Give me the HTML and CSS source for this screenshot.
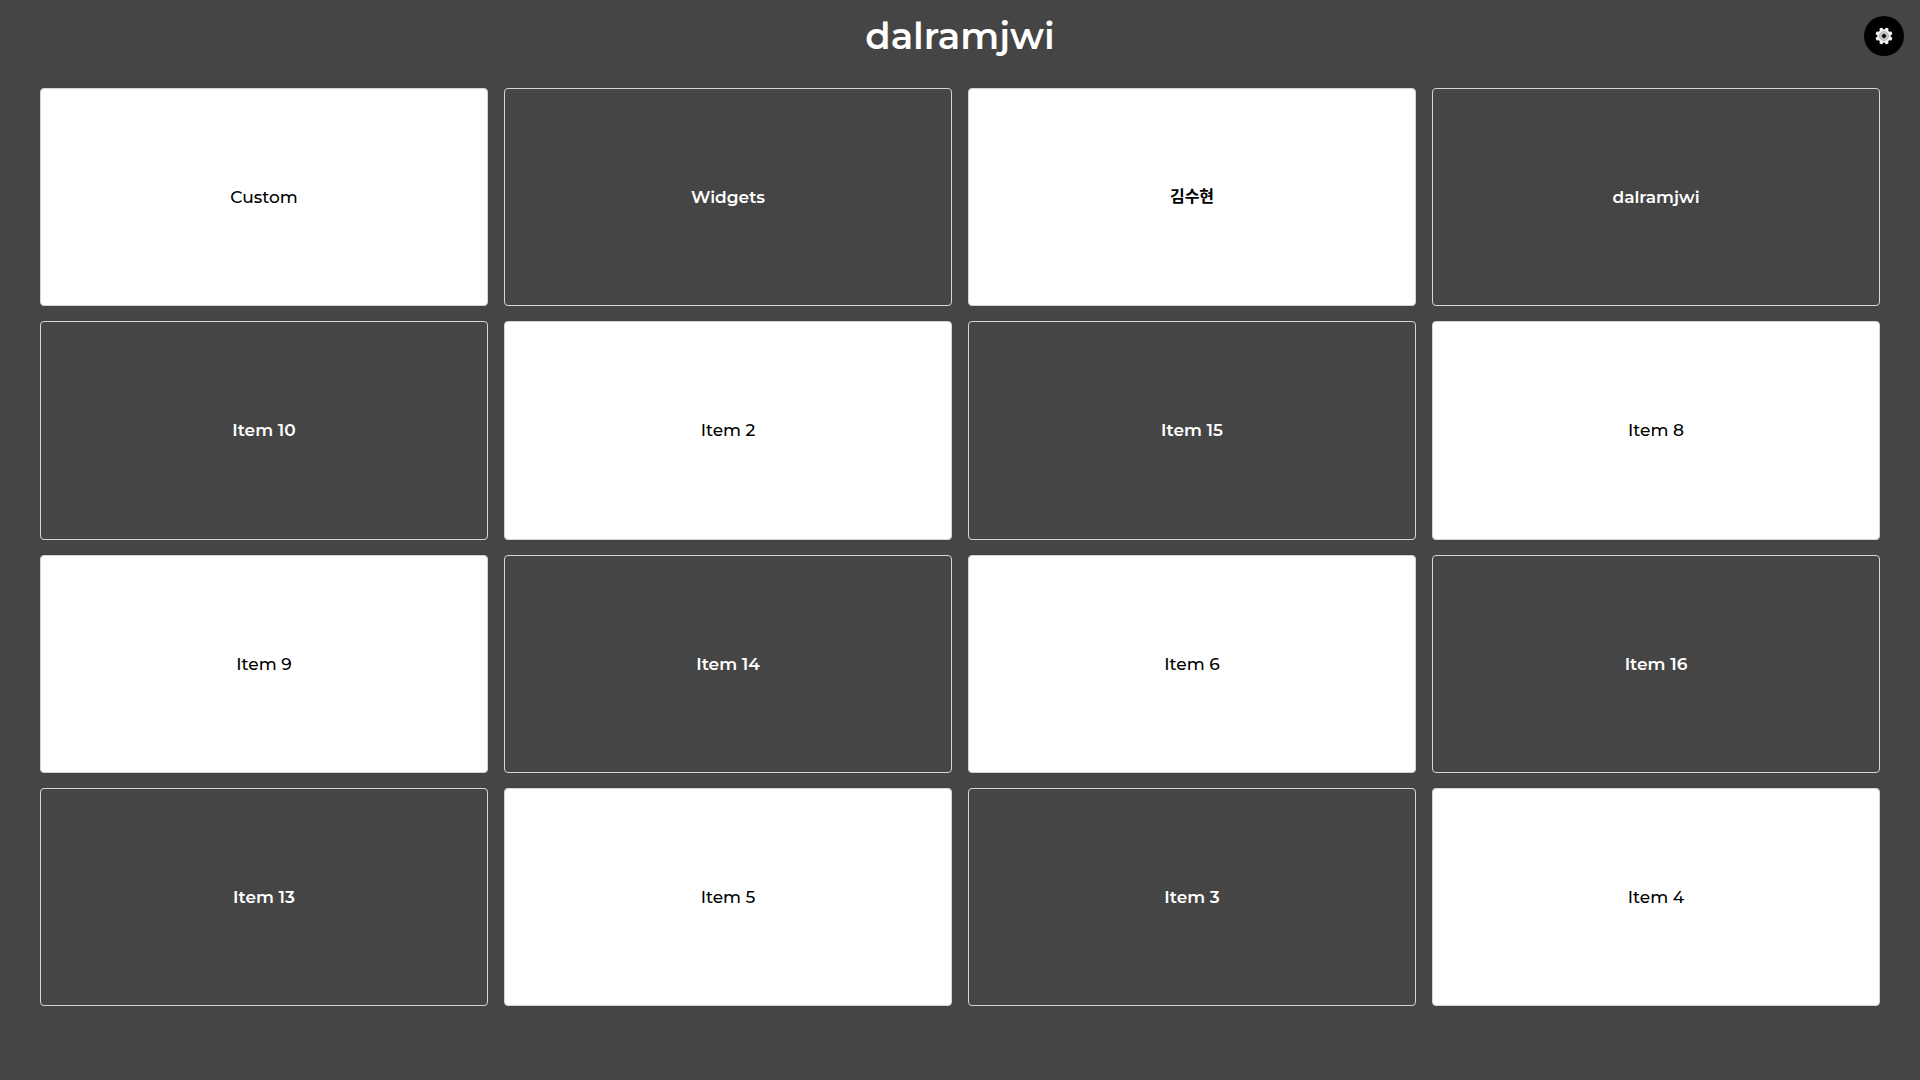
FILE: index.html
```html
<!DOCTYPE html>
<html lang="ko">
<head>
<meta charset="utf-8">
<title>dalramjwi</title>
<link rel="stylesheet" href="styles.css">
</head>
<body>
<header class="header">
<h1 class="title">dalramjwi</h1>
<button class="settings" type="button" aria-label="Settings">
<svg class="gear" viewBox="0 0 18 18" aria-hidden="true">
<g fill="#f0f0f0">
<circle cx="9" cy="9" r="6.8"/>
<rect x="7.3" y="0.4" width="3.4" height="17.2" rx="1" transform="rotate(22.5 9 9)"/>
<rect x="7.3" y="0.4" width="3.4" height="17.2" rx="1" transform="rotate(67.5 9 9)"/>
<rect x="7.3" y="0.4" width="3.4" height="17.2" rx="1" transform="rotate(112.5 9 9)"/>
<rect x="7.3" y="0.4" width="3.4" height="17.2" rx="1" transform="rotate(157.5 9 9)"/>
</g>
<circle cx="9" cy="9" r="4.4" fill="#d8d8d8" stroke="#aaa" stroke-width="1"/>
<circle cx="9" cy="9" r="2.3" fill="#000" stroke="#888" stroke-width="1"/>
</svg>
</button>
</header>
<main class="grid">
<div class="card light">Custom</div>
<div class="card dark">Widgets</div>
<div class="card light korean">김수현</div>
<div class="card dark">dalramjwi</div>
<div class="card dark">Item 10</div>
<div class="card light">Item 2</div>
<div class="card dark">Item 15</div>
<div class="card light">Item 8</div>
<div class="card light">Item 9</div>
<div class="card dark">Item 14</div>
<div class="card light">Item 6</div>
<div class="card dark">Item 16</div>
<div class="card dark">Item 13</div>
<div class="card light">Item 5</div>
<div class="card dark">Item 3</div>
<div class="card light">Item 4</div>
</main>
</body>
</html>
```
FILE: styles.css
```css
* {
  box-sizing: border-box;
}

body {
  margin: 0;
  min-height: 100vh;
  background: #454545;
  color: #fff;
  font-family: Montserrat, Inter, "Noto Sans CJK KR", sans-serif;
}

.header {
  display: grid;
  grid-template-columns: 1fr auto 1fr;
  align-items: center;
  height: 72px;
  padding: 0 16px;
}

.title {
  grid-column: 2;
  margin: 0;
  font-size: 37px;
  font-weight: 600;
  line-height: 48px;
}

.settings {
  display: flex;
  align-items: center;
  justify-content: center;
  justify-self: end;
  width: 40px;
  height: 40px;
  padding: 0;
  border: 0;
  border-radius: 50%;
  background: #000;
  cursor: pointer;
}

.gear {
  width: 18px;
  height: 18px;
}

.grid {
  display: grid;
  grid-template-columns: repeat(4, 1fr);
  grid-template-rows: repeat(4, 1fr);
  gap: 15px 16px;
  height: 85vh;
  margin: 16px 40px 0;
}

.card {
  display: flex;
  align-items: center;
  justify-content: center;
  border: 1px solid #d1d5db;
  border-radius: 4px;
  font-size: 17px;
  line-height: 24px;
}

.light {
  background: #fff;
  color: #000;
  font-weight: 500;
}

.dark {
  font-weight: 600;
}

.korean {
  font-size: 16px;
  font-weight: 700;
}
```
